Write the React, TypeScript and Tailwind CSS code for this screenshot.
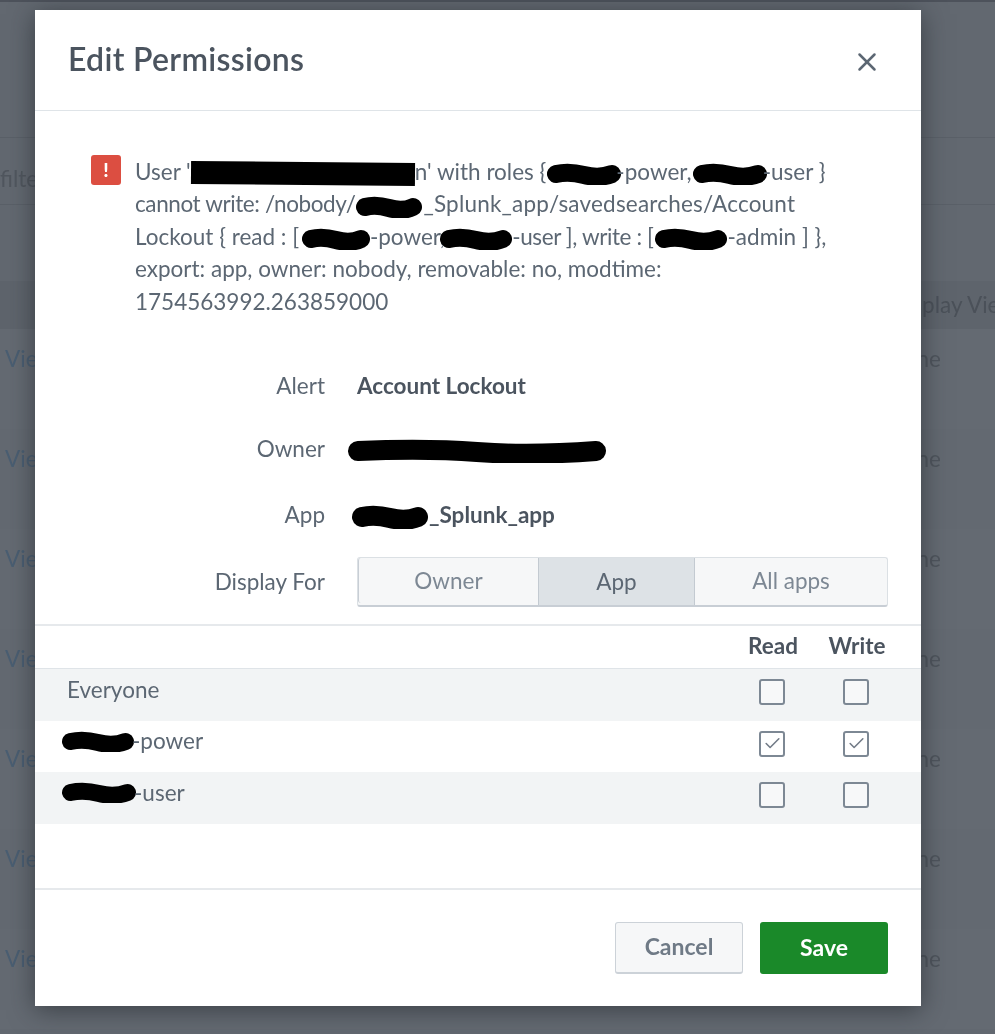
import { Check, X } from 'lucide-react';

const roles = [
  { name: 'Everyone', blob: 0, read: false, write: false, shade: true },
  { name: '-power', blob: 74, read: true, write: true, shade: false },
  { name: '-user', blob: 76, read: false, write: false, shade: true },
];

// black marker scribble over redacted text
function Blob({ w, h = 22, className = '' }: { w: number; h?: number; className?: string }) {
  return (
    <svg width={w} height={h} viewBox={`0 0 ${w} ${h}`} className={`inline-block align-middle ${className}`}>
      <path
        d={`M${h / 2 - 1} ${h / 2} Q${w * 0.3} ${h / 2 - 3} ${w * 0.5} ${h / 2 + 1} T${w - h / 2 + 1} ${h / 2}`}
        fill="none"
        stroke="#000"
        strokeWidth={h - 4}
        strokeLinecap="round"
      />
    </svg>
  );
}

function FormRow({ label, className, children }: { label: string; className: string; children: React.ReactNode }) {
  return (
    <div className={`flex items-center ${className}`}>
      <div className="w-[290px] text-right text-[#5c6773]">{label}</div>
      <div className="ml-[32px] flex-1">{children}</div>
    </div>
  );
}

function Box({ checked }: { checked: boolean }) {
  return (
    <div className="w-[26px] h-[26px] mt-[-6px] flex items-center justify-center rounded-[3px] border-2 border-[#7d8894] bg-white/40">
      {checked && <Check size={19} strokeWidth={2} className="text-[#727b87]" />}
    </div>
  );
}

function BackgroundPage() {
  const rows = [0, 1, 2, 3, 4, 5, 6];
  return (
    <div className="w-full h-full bg-[#626870] border-t-2 border-[#4d525b]">
      <div className="h-[136px] border-b border-[#5a6068]" />
      <div className="h-[67px] border-b border-[#5a6068] pt-[24px] text-[#50565e]">filter</div>
      <div className="h-[76px]" />
      <div className="h-[48px] bg-[#5e646c] flex items-center justify-end whitespace-nowrap text-[#4b5159]">
        <span className="mr-[-22px]">Display View</span>
      </div>
      {rows.map(r => (
        <div key={r} className={`h-[100px] flex justify-between pt-[13px] px-[5px] ${r % 2 ? 'bg-[#636971]' : 'bg-[#646a72]'}`}>
          <span className="text-[#4a5e72]">View</span>
          <span className="text-[#4f555d] mr-[49px]">None</span>
        </div>
      ))}
    </div>
  );
}

export default function App() {
  return (
    <div className="relative w-[995px] h-[1034px] overflow-hidden blur-[0.5px] font-['Lato','Liberation_Sans',sans-serif] text-[22.5px]">
      <BackgroundPage />

      {/* Modal */}
      <div className="absolute left-[35px] top-[10px] w-[886px] h-[996px] bg-white flex flex-col shadow-[0_4px_24px_rgba(30,35,40,0.6)]">
        <div className="h-[101px] shrink-0 flex items-start justify-between border-b border-[#dfe4e8] pl-[33px] pr-[39px]">
          <h1 className="mt-[27px] text-[32px] tracking-[0.3px] leading-[44px] font-semibold text-[#4b545f]">Edit Permissions</h1>
          <button className="mt-[37px] text-[#5c6773]">
            <X size={30} strokeWidth={2} />
          </button>
        </div>

        {/* Error message */}
        <div className="flex pt-[45px] pl-[56px] text-[#5c6773] leading-[32.4px] whitespace-nowrap">
          <div className="w-[30px] h-[30px] rounded-[3px] bg-[#dc4e41] flex items-center justify-center text-white font-black text-[19px] shrink-0 mt-[-1px]">
            !
          </div>
          <div className="ml-[14px]">
            User '
            <span className="inline-block align-middle w-[224px] h-[23px] bg-black mt-[-2px] rotate-[0.5deg]" />
            n' with roles {'{'}
            <Blob w={76} className="mr-[-6px]" />
            -power,
            <Blob w={76} className="mr-[-5px]" />
            -user {'}'}
            <br />
            <span className="tracking-[-0.4px]">cannot write: /nobody/</span>
            <Blob w={68} />
            <span className="tracking-[0.2px]">_Splunk_app/savedsearches/Account</span>
            <br />
            Lockout {'{'} read : [ <Blob w={70} className="ml-[-4px] mr-[-1px]" />
            -power,
            <Blob w={74} className="ml-[-6px] mr-[-1px]" />
            <span className="tracking-[-0.4px]">-user ], write : [</span>
            <Blob w={74} />
            -admin ] {'}'},
            <br />
            export: app, owner: nobody, removable: no, modtime:
            <br />
            1754563992.263859000
          </div>
        </div>

        {/* Form */}
        <div className="mt-[36px]">
          <FormRow label="Alert" className="h-[64px]">
            <span className="font-bold text-[#4b545f]">Account Lockout</span>
          </FormRow>
          <FormRow label="Owner" className="h-[65px] pb-[3px]">
            <Blob w={260} h={24} className="ml-[-10px]" />
          </FormRow>
          <FormRow label="App" className="h-[66px] pb-[2px]">
            <span className="font-bold text-[#4b545f] whitespace-nowrap">
              <Blob w={78} h={24} className="ml-[-6px]" />_Splunk_app
            </span>
          </FormRow>
          <FormRow label="Display For" className="h-[50px] mt-[8px]">
            <div className="w-[531px] h-[50px] flex rounded-[3px] border border-[#dbe0e4] border-b-2 border-b-[#c8ced5] bg-[#f6f7f8] text-[#7d8894] pb-[2px]">
              <div className="w-[180px] flex items-center justify-center border-l border-[#c8ced5] rounded-l-[3px]">Owner</div>
              <div className="w-[157px] flex items-center justify-center bg-[#dde2e6] border-x border-[#c3cad1] text-[#5c6773] mb-[-2px]">App</div>
              <div className="flex-1 flex items-center justify-center">All apps</div>
            </div>
          </FormRow>
        </div>

        {/* Roles table */}
        <div className="mt-[17px] border-t-2 border-[#e6e9ec]">
          <div className="h-[43px] flex items-center pl-[696px] font-bold text-[#4b545f] border-b border-[#dfe4e8] pb-[3px]">
            <span className="w-[84px] text-center">Read</span>
            <span className="w-[84px] text-center">Write</span>
          </div>
          {roles.map(role => (
            <div
              key={role.name}
              className={`h-[51.7px] flex items-center pr-[23px] text-[#5c6773] ${role.shade ? 'bg-[#f2f4f5]' : 'bg-white'}`}
            >
              <div className={`flex-1 flex items-center mt-[-11px] ${role.blob ? 'pl-[26px]' : 'pl-[32px]'}`}>
                {role.blob > 0 && <Blob w={role.blob} h={21} className="mr-[-3px]" />}
                {role.name}
              </div>
              <div className="w-[84px] flex justify-center"><Box checked={role.read} /></div>
              <div className="w-[84px] flex justify-center"><Box checked={role.write} /></div>
            </div>
          ))}
        </div>

        {/* Footer */}
        <div className="mt-auto h-[118px] border-t-2 border-[#e6e9ec] flex justify-end gap-[17px] pt-[32px] pr-[33px]">
          <button className="w-[128px] h-[52px] rounded-[3px] border border-[#ccd2d8] border-b-2 bg-[#f6f7f8] font-bold text-[23px] text-[#6f7a86] pb-[2px]">
            Cancel
          </button>
          <button className="w-[128px] h-[52px] rounded-[3px] bg-[#1a8929] font-bold text-[23px] text-white pb-[2px]">Save</button>
        </div>
      </div>
    </div>
  );
}
